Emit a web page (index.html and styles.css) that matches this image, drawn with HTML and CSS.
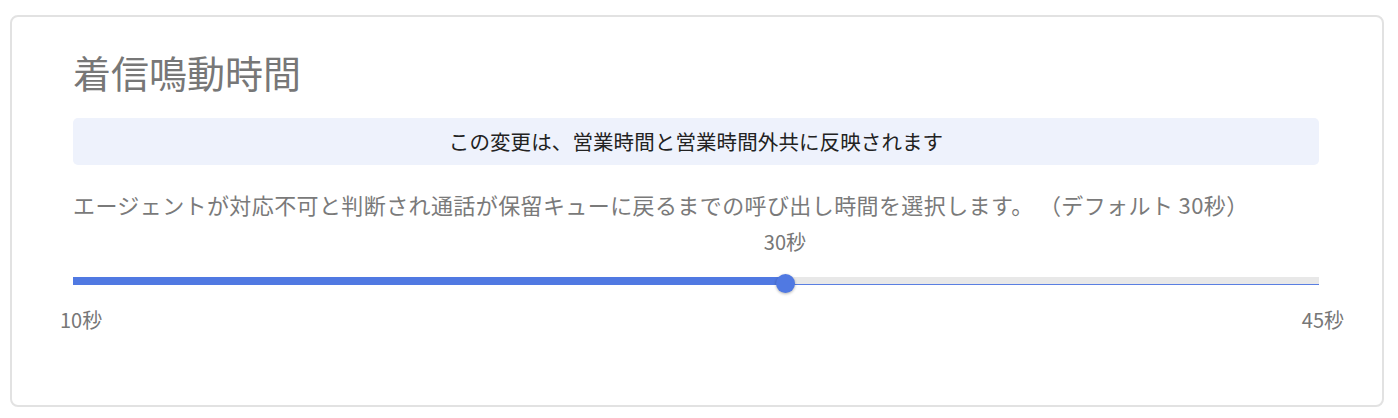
FILE: index.html
```html
<!DOCTYPE html>
<html lang="ja">
<head>
  <meta charset="UTF-8" />
  <meta name="viewport" content="width=device-width, initial-scale=1.0"/>
  <title>着信鳴動時間</title>
  <link rel="stylesheet" href="styles.css">
</head>
<body>

  <section class="card">
    <h1 class="card-title">着信鳴動時間</h1>

    <div class="notice">この変更は、営業時間と営業時間外共に反映されます</div>

    <p class="description">エージェントが対応不可と判断され通話が保留キューに戻るまでの呼び出し時間を選択します。 （デフォルト 30秒）</p>

    <div class="slider">
      <div class="slider-value" style="padding-left: 57.14%;"><span>30秒</span></div>
      <div class="slider-track">
        <div class="slider-fill" style="width: 57.14%;"></div>
        <div class="slider-thumb" style="left: 57.14%;"></div>
      </div>
      <div class="slider-range">
        <span>10秒</span>
        <span>45秒</span>
      </div>
    </div>
  </section>

</body>
</html>
```

FILE: styles.css
```css
body {
  margin: 0;
  background: #fff;
  font-family: "Noto Sans CJK JP", "Noto Sans", sans-serif;
}

.card {
  margin: 15px 14px 11px 10px;
  height: 392px;
  box-sizing: border-box;
  border: 2px solid #e2e2e2;
  border-radius: 8px;
  padding: 32px 63px 0 61px;
}

.card-title {
  margin: 0;
  font-size: 38px;
  font-weight: 400;
  line-height: 46px;
  color: #777;
}

.notice {
  margin-top: 23px;
  height: 47px;
  line-height: 47px;
  background: #eef2fc;
  border-radius: 5px;
  text-align: center;
  font-size: 20.5px;
  letter-spacing: 0.1px;
  color: #222;
}

.description {
  margin: 24px 0 0;
  font-size: 22px;
  letter-spacing: 0.4px;
  line-height: 30px;
  color: #7a7a7a;
}

.slider {
  margin-top: 11px;
}

.slider-value {
  font-size: 20px;
  line-height: 24px;
  color: #777;
}

.slider-value span {
  display: inline-block;
  transform: translateX(-50%);
}

.slider-track {
  position: relative;
  margin-top: 23px;
  height: 8px;
  background: #e8e8e8;
  box-shadow: inset 0 -1px 0 #5a7fe2;
}

.slider-fill {
  height: 100%;
  background: #5079e2;
}

.slider-thumb {
  position: absolute;
  top: -3px;
  width: 19px;
  height: 19px;
  margin-left: -9px;
  border-radius: 50%;
  background: #5079e2;
  box-shadow: 0 1px 3px rgba(0, 0, 0, 0.3);
}

.slider-range {
  display: flex;
  justify-content: space-between;
  margin: 23px -25px 0 -13px;
  font-size: 20px;
  line-height: 24px;
  color: #777;
}
```
